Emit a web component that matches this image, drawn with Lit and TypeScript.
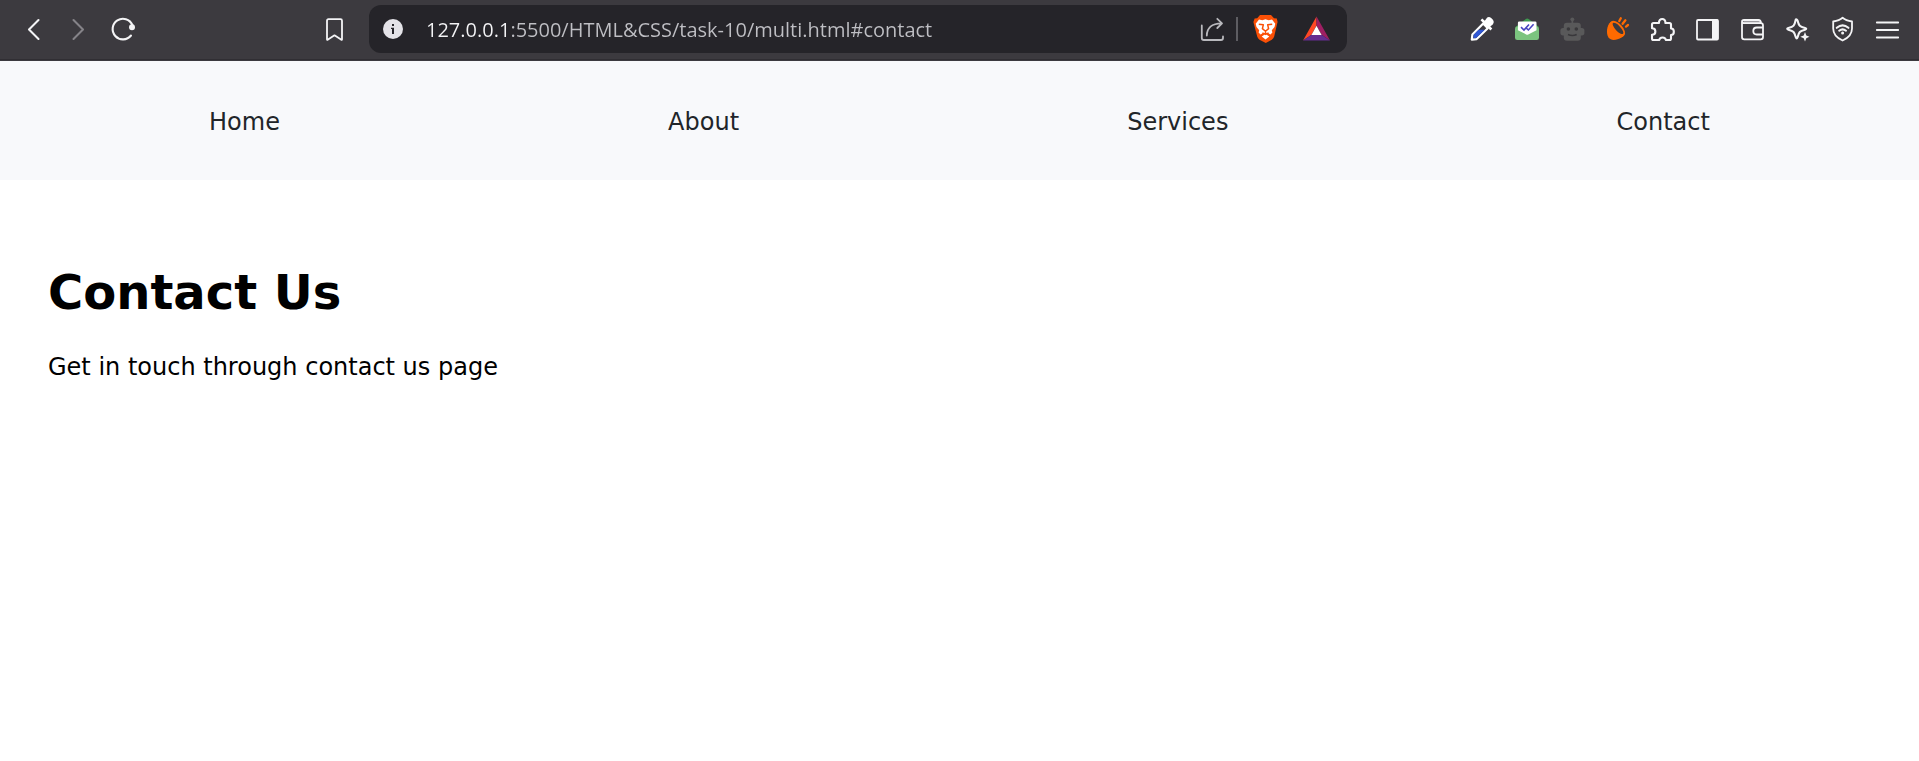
import { LitElement, html, css, svg } from "lit";
import { customElement, state } from "lit/decorators.js";

const icon = (body: unknown) => html`<svg class="icon" viewBox="0 0 45 36" aria-hidden="true">${body}</svg>`;

const icons = {
  back: svg`<path class="line" d="M27.5 9L18 18.5L27.5 28"/>`,
  forward: svg`<path class="line dim" d="M17.5 9L27 18.5L17.5 28"/>`,
  reload: svg`<path class="line" d="M30 24.5A10.3 10.3 0 1 1 31.4 14"/><circle class="fill" cx="31" cy="16.2" r="3"/>`,
  bookmark: svg`<path class="line thin" d="M16.5 8.2H28.5Q30 8.2 30 9.7V28.2Q30 29.4 29 28.6L22.5 24.3L16 28.6Q15 29.4 15 28.2V9.7Q15 8.2 16.5 8.2Z"/>`,
  share: svg`<path class="line soft" d="M11.8 14.5V27Q11.8 29 13.8 29H31Q33 29 33 27V25.5M16.8 24.5C17 17.5 21.5 12.3 31.5 12.3M27.3 7.8L32 12.3L27.3 17"/>`,
  brave: svg`<path fill="#fb5006" d="M17 4H28L31 7.2L33.8 7.4L34.6 11L34 13.2L31.2 25.5Q30.6 27.5 28.8 28.7L22.8 32L16.5 28.7Q14.8 27.5 14.2 25.5L11 13.2L10.4 11L11.6 7.4L14.2 7.2Z"/>
    <path fill="#fff" d="M16 8.5L19.3 9.2L22.5 8.2L25.7 9.2L29 8.5L32.3 12.8L31.5 16L28.8 19.2L29.4 21.5L27.5 23.5L25.3 22.2L23.2 23.4L26.3 25.5L22.5 28.6L18.7 25.5L21.8 23.4L19.7 22.2L17.5 23.5L15.6 21.5L16.2 19.2L13.5 16L12.7 12.8Z"/>
    <path fill="none" stroke="#fb5006" stroke-width="1.5" stroke-linejoin="round" d="M15.8 13.2L20.3 13.8L19.4 17.6L22.5 20.2L25.6 17.6L24.7 13.8L29.2 13.2M22.5 20.2V22.4M19.4 22L22.5 23.4L25.6 22"/>`,
  rewards: svg`<path fill="#ff4724" d="M22.5 5.5L9 29.4L17.5 23.8L22.5 14.5Z"/><path fill="#9e1f63" d="M22.5 5.5L36 29.4L27.5 23.8L22.5 14.5Z"/><path fill="#662d91" d="M9 29.4H36L27.5 23.8H17.5Z"/><path fill="#fff" d="M22.5 14.8L27.6 24H17.4Z"/>`,
  dropper: svg`<path fill="#fff" d="M20.5 9.2L22.3 7.5L24.8 9.8L27.2 6.6Q29 5 31.2 7.1L33.1 9Q34.7 11.3 33 13.2L30.3 15.6L32.3 17.5L30.4 19.5Z"/>
    <path fill="#3c3a3f" stroke="#fff" stroke-width="2.2" stroke-linejoin="round" d="M23.2 12.5L12.4 23.5L11.8 28.6L16.4 28.2L27.8 17.2Z"/><path fill="#3057d5" d="M18.5 18.7H24.7L16.2 27L13.4 27.2L13.7 23.8Z"/>`,
  mail: svg`<path fill="#3f9a50" d="M10.5 16L20.5 8.2Q22.2 6.8 24 8.2L34 16Z"/><path fill="#7bc47f" d="M10 17.5Q10 15.5 12 15.5H32Q34 15.5 34 17.5V26.7Q34 29 31.7 29H12.3Q10 29 10 26.7Z"/><path fill="#fff" d="M14.2 10.5H30.2Q31.5 10.5 31.5 11.8V19.3L23.2 23.4Q22.2 23.9 21.2 23.4L12.9 19.3V11.8Q12.9 10.5 14.2 10.5Z"/><path fill="none" stroke="#4745c0" stroke-width="1.6" d="M16 16.2L19 19L24 13.5M21.3 17.2L23.4 19L28.6 13.3"/>`,
  robot: svg`<g fill="#59595a"><circle cx="22.3" cy="8.3" r="1.9"/><rect x="21.5" y="9" width="1.7" height="4"/><rect x="13.8" y="11.7" width="17" height="18" rx="3"/><rect x="10.4" y="17" width="24" height="7.4" rx="2.6"/></g><g fill="#39383b"><circle cx="18.4" cy="18" r="1.8"/><circle cx="26.3" cy="18" r="1.8"/></g><path d="M18 23.5Q22.3 25.5 26.7 23.5" fill="none" stroke="#39383b" stroke-width="1.5"/>`,
  bulb: svg`<path fill="#ff6a00" d="M15.8 10.8C11.5 14.5 11 22.5 13.4 26.3C15.5 29.5 19.5 29.2 22.5 28.2C25.5 27.2 28.2 25.8 29.2 24.5Z"/><ellipse fill="#ff6a00" cx="22.6" cy="17.6" rx="9.6" ry="5" transform="rotate(47 22.6 17.6)"/><ellipse fill="#3c3a3f" cx="23" cy="17.4" rx="7.4" ry="2.6" transform="rotate(47 23 17.4)"/><path stroke="#ff6a00" stroke-width="2.3" stroke-linecap="round" d="M24.3 10L25.8 7.2M27.6 12.8L30.4 9.3M31 15.6L33 14"/>`,
  puzzle: svg`<path class="line" d="M13.5 12H19C18.4 6.7 26 6.7 25.4 12H29.5Q31 12 31 13.5V17.5C34.8 17.5 34.8 24 31 24V27.5Q31 29 29.5 29H25.8C25.5 25.6 19.6 25.6 19.3 29H13.5Q12 29 12 27.5V23.8C16.5 23.8 16.5 17.2 12 17.2V13.5Q12 12 13.5 12Z"/>`,
  panel: svg`<rect class="line thin" x="12" y="9" width="21" height="19.5" rx="1"/><path class="fill" d="M27 8.5H33V29H27Z"/>`,
  wallet: svg`<path fill="#9c9a9f" d="M14 9H28.5Q31 9 31.5 12H13Z"/><path class="line thin" d="M12 11V26Q12 28.3 14.3 28.3H30.7Q33 28.3 33 26V14.5Q33 12.2 30.7 12.2H14Q12 12.2 12 10.6Q12 9 14 9H28.5Q30.8 9 31 12M33 16.5H26.8Q23.3 16.5 23.3 20Q23.3 23.5 26.8 23.5H33"/>`,
  sparkle: svg`<path class="line" d="M20.8 8.5Q22 8 22.6 9.7C24 15 24.5 15.5 30 16.9Q32.5 17.8 30 18.7C24.5 20.2 24 20.8 22.6 26.2Q21.7 28.8 20.8 26.2C19.3 20.8 18.8 20.2 13.4 18.7Q11 17.8 13.4 16.9C18.8 15.5 19.4 15 20.8 8.5Z"/><path class="fill" d="M30 21L31.3 24.5L34.5 25.8L31.3 27.2L30 30.6L28.7 27.2L25.3 25.8L28.7 24.5Z"/>`,
  shield: svg`<path class="line thin" d="M22.6 6.8Q25.8 9.6 32 10.5V17.5C32 23.5 28.2 27 22.6 29.5C17 27 13.2 23.5 13.2 17.5V10.5Q19.4 9.6 22.6 6.8Z"/><path class="line" d="M16.8 16.8Q22.6 12 28.4 16.8M19.2 19.7Q22.6 17 26 19.7"/><circle class="fill" cx="22.6" cy="22" r="1.5"/>`,
  menu: svg`<path class="line thin" d="M11.8 11.5H33.2M11.8 19H33.2M11.8 26.5H33.2"/>`,
};

@customElement("tool-button")
class ToolButton extends LitElement {
  static properties = { name: {}, label: {}, disabled: { type: Boolean } };
  declare name: keyof typeof icons;
  declare label: string;
  declare disabled: boolean;

  static styles = css`
    :host { display: block; flex: none; }
    .button {
      display: flex; align-items: center; justify-content: center;
      width: 45px; height: 40px; margin: 0; padding: 0;
      border: 0; border-radius: 8px; background: none;
    }
    .button:hover:enabled { background: #ffffff14; }
    .icon { display: block; width: 45px; height: 36px; }
    .line { fill: none; stroke: #f4f4f6; stroke-width: 2.1; stroke-linecap: round; stroke-linejoin: round; }
    .thin { stroke-width: 1.8; }
    .dim { stroke: #858388; }
    .soft { stroke: #b9b9bd; stroke-width: 1.8; }
    .fill { fill: #f4f4f6; }
  `;

  render() {
    return html`<button class="button" type="button" aria-label=${this.label} ?disabled=${this.disabled}>
      ${icon(icons[this.name])}
    </button>`;
  }
}

@customElement("browser-toolbar")
class BrowserToolbar extends LitElement {
  static styles = css`
    :host { display: block; }
    .bar {
      display: flex; align-items: center; box-sizing: border-box;
      height: 61px; padding: 0 9px 3px 11px;
      background: linear-gradient(#3c3a3f 59px, #302e33 59px 60px, #3c3a3f 60px);
    }
    .group { display: flex; flex: none; }
    .lead { flex: 166 1 0; }
    .trail { flex: 113 1 0; }
    .address {
      display: flex; align-items: center; flex: 956 1 0; min-width: 0;
      height: 48px; margin-left: 12px; padding: 0 8px 0 14px; box-sizing: border-box;
      border-radius: 12px; background: #252429;
    }
    .info { flex: none; width: 20px; height: 20px; margin-right: 23px; }
    .url {
      flex: 1; min-width: 0; height: 40px; padding: 0; border: 0; outline: 0;
      font: 20px "Open Sans", "Noto Sans", sans-serif;
      color: transparent; caret-color: #fff;
      background: linear-gradient(90deg, #f4f4f6 81px, #bfbfc4 81px);
      -webkit-background-clip: text; background-clip: text;
    }
    .divider { flex: none; width: 2px; height: 24px; margin: 0 5px 0 1px; background: #5e5d62; }
    .rewards { margin-left: 6px; }
  `;

  @state() private extensions = [
    ["dropper", "Color picker"], ["mail", "Mail tracker"], ["robot", "Assistant"],
    ["bulb", "Highlighter"], ["puzzle", "Extensions"], ["panel", "Side panel"],
    ["wallet", "Wallet"], ["sparkle", "Leo AI"], ["shield", "VPN"], ["menu", "Menu"],
  ];

  render() {
    return html`
      <div class="bar">
        <div class="group">
          <tool-button name="back" label="Back"></tool-button>
          <tool-button name="forward" label="Forward" disabled></tool-button>
          <tool-button name="reload" label="Reload"></tool-button>
        </div>
        <div class="lead"></div>
        <tool-button name="bookmark" label="Bookmark this page"></tool-button>
        <div class="address">
          <svg class="info" viewBox="0 0 20 20" aria-hidden="true">
            <circle cx="10" cy="10" r="10" fill="#e4e3e8"/>
            <path fill="#252429" d="M9 5H11V7H9ZM8 8.7H11V15H9V10H8Z"/>
          </svg>
          <input class="url" type="text" aria-label="Address" spellcheck="false"
            value="127.0.0.1:5500/HTML&amp;CSS/task-10/multi.html#contact">
          <tool-button name="share" label="Share"></tool-button>
          <span class="divider"></span>
          <tool-button name="brave" label="Brave Shields"></tool-button>
          <tool-button class="rewards" name="rewards" label="Brave Rewards"></tool-button>
        </div>
        <div class="trail"></div>
        <div class="group">
          ${this.extensions.map(([name, label]) => html`<tool-button name=${name} label=${label}></tool-button>`)}
        </div>
      </div>
    `;
  }
}

@customElement("app-root")
class AppRoot extends LitElement {
  static styles = css`
    :host {
      display: block; min-height: 100vh; background: #fff; color: #000;
      font: 24px/30px Verdana, "DejaVu Sans", sans-serif;
    }
    .nav {
      display: flex; justify-content: space-around;
      padding: 46px 15px 43px; background: #f8f9fb;
    }
    .link { color: #212529; text-decoration: none; }
    .section { padding: 82px 48px; }
    .title { margin: 0; font-size: 48px; line-height: 60px; font-weight: 700; }
    .text { margin: 30px 0 0; }
  `;

  render() {
    return html`
      <browser-toolbar></browser-toolbar>
      <nav class="nav">
        ${["Home", "About", "Services", "Contact"].map(
          (label) => html`<a class="link" href="#${label.toLowerCase()}">${label}</a>`,
        )}
      </nav>
      <main class="section" id="contact">
        <h1 class="title">Contact Us</h1>
        <p class="text">Get in touch through contact us page</p>
      </main>
    `;
  }
}
